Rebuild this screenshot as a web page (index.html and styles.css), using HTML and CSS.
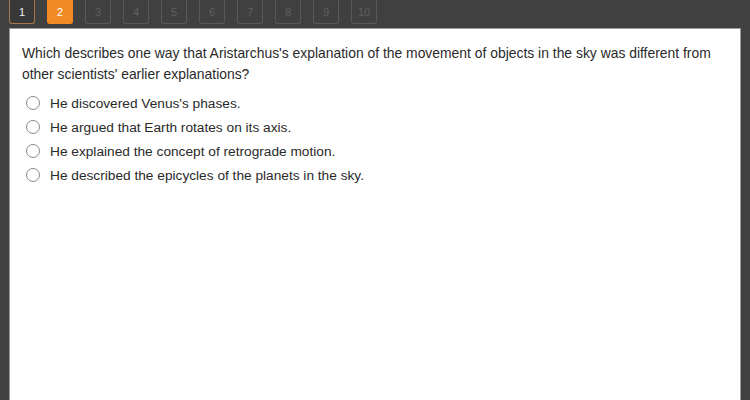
FILE: index.html
```html
<!DOCTYPE html>
<html>
<head>
<meta charset="utf-8">
<link rel="stylesheet" href="styles.css">
</head>
<body>
<div class="tabs">
  <div class="tab visited">1</div>
  <div class="tab current">2</div>
  <div class="tab">3</div>
  <div class="tab">4</div>
  <div class="tab">5</div>
  <div class="tab">6</div>
  <div class="tab">7</div>
  <div class="tab">8</div>
  <div class="tab">9</div>
  <div class="tab">10</div>
</div>
<div class="panel">
  <p class="question">Which describes one way that Aristarchus's explanation of the movement of objects in the sky was different from other scientists' earlier explanations?</p>
  <ul class="options">
    <li class="option"><span class="radio"></span>He discovered Venus's phases.</li>
    <li class="option"><span class="radio"></span>He argued that Earth rotates on its axis.</li>
    <li class="option"><span class="radio"></span>He explained the concept of retrograde motion.</li>
    <li class="option"><span class="radio"></span>He described the epicycles of the planets in the sky.</li>
  </ul>
</div>
</body>
</html>
```

FILE: styles.css
```css
html, body {
  margin: 0;
  padding: 0;
  height: 100%;
}
body {
  background: #404040;
  font-family: "Liberation Sans", Arial, sans-serif;
  overflow: hidden;
  display: flex;
  flex-direction: column;
}
.tabs {
  display: flex;
  gap: 12px;
  padding: 0 0 0 9px;
  height: 28px;
  flex: none;
}
.tab {
  box-sizing: border-box;
  width: 26px;
  height: 24px;
  border: 1px solid #585858;
  border-top: none;
  border-radius: 0 0 3px 3px;
  color: #5f5f5f;
  font-size: 11px;
  display: flex;
  align-items: center;
  justify-content: center;
}
.tab.visited {
  background: #383838;
  border-color: #a8764a;
  color: #f2f2f2;
}
.tab.current {
  background: #f28a24;
  border-color: #f28a24;
  color: #ffffff;
}
.panel {
  flex: 1;
  margin: 0 9px;
  background: #ffffff;
  border-left: 1px solid #9a9a9a;
  border-right: 1px solid #9a9a9a;
  border-top: 1px solid #9a9a9a;
  box-sizing: border-box;
  padding: 14px 12px 0 12px;
}
.question {
  margin: 0;
  font-size: 13.9px;
  line-height: 21px;
  color: #2a2a2a;
}
.options {
  list-style: none;
  margin: 6px 0 0 0;
  padding: 0 0 0 4px;
}
.option {
  display: flex;
  align-items: center;
  height: 24px;
  font-size: 13.7px;
  color: #2a2a2a;
}
.radio {
  box-sizing: border-box;
  width: 14px;
  height: 14px;
  border: 1.5px solid #8a8a8a;
  border-radius: 50%;
  margin-right: 10px;
  flex: none;
}
```
